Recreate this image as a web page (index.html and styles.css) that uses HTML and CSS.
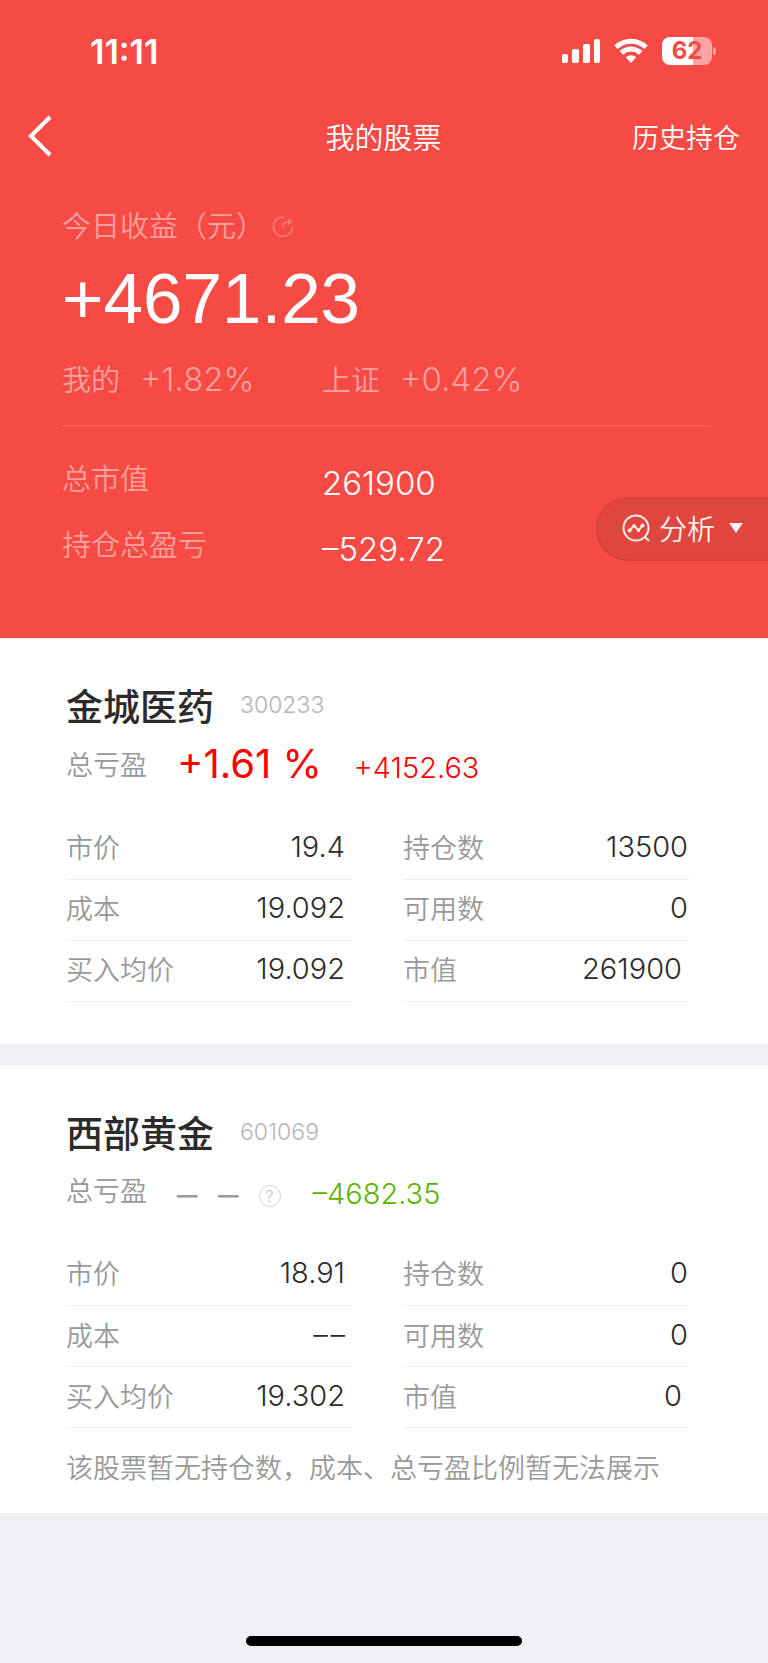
FILE: index.html
```html
<!DOCTYPE html>
<html lang="zh-CN">
  <head>
    <meta charset="UTF-8" />
    <meta name="viewport" content="width=device-width, initial-scale=1.0" />
    <title>我的股票</title>
    <link rel="stylesheet" href="styles.css">
  </head>

  <body>
    <header>
      <div class="status-bar">
        <div class="time">11:11</div>
        <div class="status-icons">
          <svg class="signal" width="39" height="26" viewBox="0 0 39 26" fill="#fff">
            <rect x="0" y="16" width="6" height="9" rx="2" />
            <rect x="10" y="11" width="7" height="14" rx="2" />
            <rect x="21" y="6" width="7" height="19" rx="2" />
            <rect x="32" y="1" width="6" height="24" rx="2" />
          </svg>
          <svg class="wifi" width="34" height="26" viewBox="0 0 34 26" fill="none" stroke="#fff" stroke-width="5">
            <path d="M2 9.2C10.500 1.100 23.500 1.100 32 9.200" />
            <path d="M7.300 14.800C13 9.600 21 9.600 26.700 14.800" />
            <path d="M11.800 19.300C14.800 16.600 19.200 16.600 22.200 19.300L17 25Z" fill="#fff" stroke="none" />
          </svg>
          <div class="battery"><span>62</span></div>
        </div>
      </div>

      <nav>
        <a class="back" href="#" aria-label="返回">
          <svg width="26" height="42" viewBox="0 0 26 42" fill="none" stroke="#fff" stroke-width="4">
            <path d="M23 2L4 21L23 40" />
          </svg>
        </a>
        <h1>我的股票</h1>
        <a class="history" href="#">历史持仓</a>
      </nav>

      <div class="summary">
        <div class="income-label">
          今日收益（元）
          <svg width="22" height="22" viewBox="0 0 22 22" fill="none" stroke="currentColor" stroke-width="1.500">
            <path d="M12 1.200A9.600 9.600 0 1 0 20.600 11" />
            <path d="M10.500 12C10 7.500 13 5.500 18 5.500M15.800 3.200L19 5.500L16.500 8.500" />
          </svg>
        </div>
        <div class="income">+4671.23</div>
        <div class="rates">
          <div>我的<span class="num">+1.82%</span></div>
          <div>上证<span class="num">+0.42%</span></div>
        </div>
        <dl class="totals">
          <dt>总市值</dt>
          <dd>261900</dd>
          <dt>持仓总盈亏</dt>
          <dd>–529.72</dd>
        </dl>
      </div>

      <button class="analyze" type="button">
        <svg width="28" height="28" viewBox="0 0 28 28" fill="none" stroke="currentColor" stroke-width="2">
          <circle cx="14" cy="14" r="12.500" />
          <path d="M22.500 22.500L27 27" />
          <path d="M7.500 16.500L12 11.500L16.500 16.500L20.500 11.500" />
          <g fill="currentColor" stroke="none">
            <circle cx="7.500" cy="16.500" r="2" />
            <circle cx="12" cy="11.500" r="1.500" />
            <circle cx="16.500" cy="16.500" r="1.500" />
            <circle cx="20.500" cy="11.500" r="2" />
          </g>
        </svg>
        分析
        <span class="arrow"></span>
      </button>
    </header>

    <main>
      <section class="stock">
        <div class="stock-title">
          <h2>金城医药</h2>
          <span class="code">300233</span>
        </div>
        <div class="profit up">
          <span class="label">总亏盈</span>
          <span class="rate">+1.61 %</span>
          <span class="amount">+4152.63</span>
        </div>
        <div class="details">
          <table>
            <tr><th scope="row">市价</th><td>19.4</td></tr>
            <tr><th scope="row">成本</th><td>19.092</td></tr>
            <tr><th scope="row">买入均价</th><td>19.092</td></tr>
          </table>
          <table class="holding">
            <tr><th scope="row">持仓数</th><td>13500</td></tr>
            <tr><th scope="row">可用数</th><td>0</td></tr>
            <tr><th scope="row">市值</th><td>261900</td></tr>
          </table>
        </div>
      </section>

      <section class="stock">
        <div class="stock-title">
          <h2>西部黄金</h2>
          <span class="code">601069</span>
        </div>
        <div class="profit down">
          <span class="label">总亏盈</span>
          <span class="empty">–&ensp;–</span>
          <button class="help" type="button" aria-label="说明">?</button>
          <span class="amount">–4682.35</span>
        </div>
        <div class="details">
          <table>
            <tr><th scope="row">市价</th><td>18.91</td></tr>
            <tr><th scope="row">成本</th><td>–&hairsp;–</td></tr>
            <tr><th scope="row">买入均价</th><td>19.302</td></tr>
          </table>
          <table class="holding">
            <tr><th scope="row">持仓数</th><td>0</td></tr>
            <tr><th scope="row">可用数</th><td>0</td></tr>
            <tr><th scope="row">市值</th><td>0</td></tr>
          </table>
        </div>
        <p class="note">该股票暂无持仓数，成本、总亏盈比例暂无法展示</p>
      </section>
    </main>

    <div class="home-indicator"></div>
  </body>
</html>
```
FILE: styles.css
```css
* {
  box-sizing: border-box;
}

body {
  font-family: Inter, "Noto Sans CJK SC", sans-serif;
  font-weight: 350;
  margin: 0;
  min-height: 100vh;
  display: flex;
  flex-direction: column;
  background-color: #efeff4;
  color: #2b2b2b;
}

h1,
h2,
p,
dl,
dd {
  margin: 0;
}

a {
  color: inherit;
  text-decoration: none;
}

button {
  font: inherit;
  border: none;
  cursor: pointer;
}

svg {
  display: block;
}

header {
  position: relative;
  background-color: #f64a45;
  color: #fff;
  padding-bottom: 70px;
}

.status-bar {
  display: flex;
  justify-content: space-between;
  align-items: center;
  height: 102px;
  padding: 0 56px 0 90px;
}

.time {
  font-size: 34px;
  font-weight: 600;
}

.status-icons {
  display: flex;
  align-items: center;
}

.wifi {
  margin: 0 14px 0 13px;
}

.battery {
  position: relative;
  width: 50px;
  height: 28px;
  border-radius: 8px;
  background: linear-gradient(to right, #fff 62%, #fba4a2 62%);
  color: #f64a45;
  font-size: 24px;
  font-weight: 700;
  line-height: 28px;
  text-align: center;
}

.battery::after {
  content: "";
  position: absolute;
  left: 51px;
  top: 10px;
  width: 3px;
  height: 8px;
  border-radius: 0 4px 4px 0;
  background-color: #fba4a2;
}

nav {
  display: grid;
  grid-template-columns: 1fr auto 1fr;
  align-items: center;
  height: 68px;
  padding: 0 28px 0 27px;
}

nav h1 {
  font-size: 29px;
  font-weight: 350;
}

.history {
  justify-self: end;
  font-size: 27px;
}

.summary {
  padding: 35px 57px 0 62px;
  font-size: 29px;
  line-height: 44px;
}

.income-label,
.rates,
.totals dt {
  color: #fba09d;
}

.income-label {
  display: flex;
  align-items: center;
}

.income-label svg {
  opacity: 0.6;
  margin-left: 7px;
}

.income {
  font-family: "Liberation Sans", sans-serif;
  font-size: 71px;
  font-weight: 400;
  line-height: 100px;
}

.rates {
  display: grid;
  grid-template-columns: 260px 1fr;
  height: 78px;
  padding-top: 8px;
  border-bottom: 2px solid #f75a55;
}

.rates .num {
  margin-left: 20px;
  font-size: 33px;
}

.totals {
  display: grid;
  grid-template-columns: 260px 1fr;
  row-gap: 22px;
  padding-top: 31px;
}

.totals dd {
  font-size: 33px;
  padding-top: 3px;
  height: 44px;
}

/* pinned to the right edge of the header */
.analyze {
  position: absolute;
  right: 0;
  bottom: 77px;
  display: flex;
  align-items: center;
  gap: 9px;
  height: 64px;
  padding: 0 25px 2px 24px;
  border: 2px solid #d9413c;
  border-right: none;
  border-radius: 32px 0 0 32px;
  background-color: #de463e;
  color: #fdf0ef;
  font-size: 28px;
}

.arrow {
  margin-left: 5px;
  border: 7px solid transparent;
  border-top: 10px solid #fdf0ef;
  border-bottom: none;
}

.stock {
  background-color: #fff;
  padding: 37px 79px 42px 66px;
}

.stock + .stock {
  margin-top: 21px;
  padding-bottom: 24px;
}

.stock-title {
  display: flex;
  align-items: center;
  height: 60px;
}

.stock-title h2 {
  font-size: 37px;
  font-weight: 500;
}

.code {
  margin-left: 26px;
  font-size: 23px;
  color: #b5b5b5;
}

.profit {
  display: flex;
  align-items: center;
  height: 56px;
  margin-bottom: 27px;
}

.label,
th,
.note {
  font-size: 27px;
  color: #999;
}

.rate {
  margin-left: 30px;
  font-size: 40px;
  font-weight: 400;
}

.amount {
  margin: 8px 0 0 32px;
  font-size: 29px;
}

.up {
  color: #f00;
}

.down {
  color: #5bb300;
}

.empty {
  margin: 8px 0 0 30px;
  font-size: 41px;
  color: #999;
}

.help {
  width: 22px;
  height: 22px;
  margin: 12px 0 0 20px;
  padding: 0;
  border: 1px solid #d5d5d5;
  border-radius: 50%;
  background: none;
  color: #c5c5c5;
  font-size: 16px;
  line-height: 20px;
}

.details {
  display: grid;
  grid-template-columns: 1fr 1fr;
  gap: 51px;
}

table {
  width: 100%;
  border-collapse: collapse;
}

tr {
  height: 61px;
  border-bottom: 1px solid #efefef;
}

th {
  padding: 0 0 4px;
  font-weight: 350;
  text-align: left;
}

td {
  padding: 0 7px 4px 0;
  font-size: 29px;
  text-align: right;
}

.holding td {
  padding-right: 1px;
}

.holding tr:last-child td {
  padding-right: 7px;
}

.note {
  line-height: 40px;
  padding-top: 21px;
}

.home-indicator {
  width: 36%;
  height: 10px;
  margin: auto auto 17px;
  border-radius: 5px;
  background-color: #000;
}
```
